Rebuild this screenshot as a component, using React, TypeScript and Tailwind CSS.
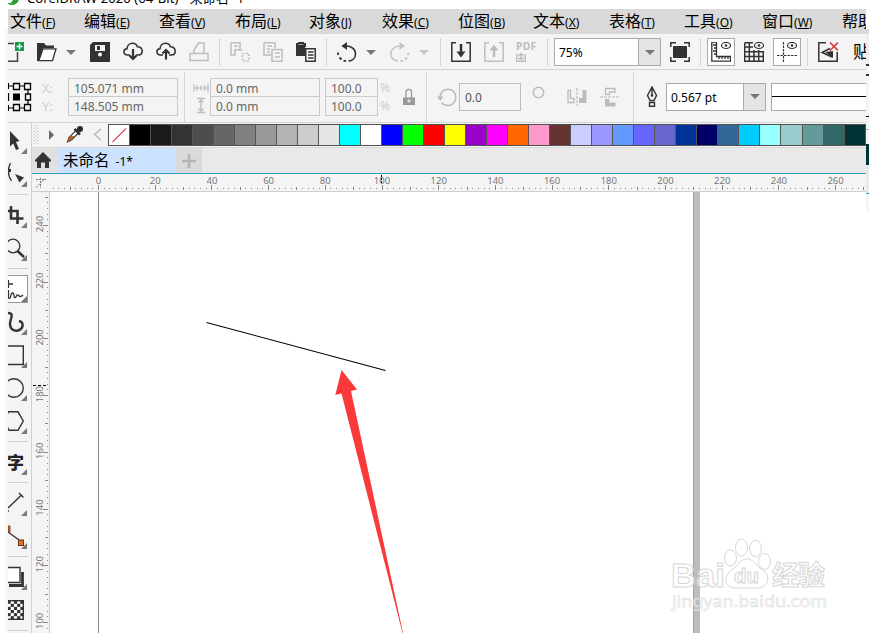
import type { ReactNode } from 'react'

const menus = [
    { label: '文件', hotkey: 'F', width: 'w-[74px]' },
    { label: '编辑', hotkey: 'E', width: 'w-[75px]' },
    { label: '查看', hotkey: 'V', width: 'w-[76px]' },
    { label: '布局', hotkey: 'L', width: 'w-[74px]' },
    { label: '对象', hotkey: 'J', width: 'w-[73px]' },
    { label: '效果', hotkey: 'C', width: 'w-[76px]' },
    { label: '位图', hotkey: 'B', width: 'w-[75px]' },
    { label: '文本', hotkey: 'X', width: 'w-[76px]' },
    { label: '表格', hotkey: 'T', width: 'w-[75px]' },
    { label: '工具', hotkey: 'O', width: 'w-[78px]' },
    { label: '窗口', hotkey: 'W', width: 'w-[80px]' },
    { label: '帮助', hotkey: 'H', width: 'w-[74px]' },
]

const swatches = [
    '#000000', '#1a1a1a', '#333333', '#4d4d4d', '#666666', '#808080', '#999999', '#b3b3b3', '#cccccc', '#e6e6e6',
    '#00ffff', '#ffffff', '#0000ff', '#00ff00', '#ff0000', '#ffff00', '#9900cc', '#ff00ff', '#ff6600', '#ff99cc',
    '#663333', '#ccccff', '#9999ff', '#6699ff', '#6666ff', '#6666cc', '#003399', '#000066', '#336699', '#00ccff',
    '#99ffff', '#99cccc', '#669999', '#336666', '#003333', '#336633',
]

// one ruler step is 2 mm
const STEP = 5.67

function Icon({ w = 20, h = 20, className = '', color = '#333', children }: { w?: number; h?: number; className?: string; color?: string; children: ReactNode }) {
    return (
        <svg width={w} height={h} viewBox={`0 0 ${w} ${h}`} fill="none" stroke={color} strokeWidth="1.5" className={`shrink-0 ${className}`}>
            {children}
        </svg>
    )
}

function Caret({ className = '', color = '#777' }: { className?: string; color?: string }) {
    return (
        <Icon w={10} h={5} className={className} color="none">
            <path d="M0 0H10L5 5Z" fill={color} />
        </Icon>
    )
}

function Separator({ className = '' }: { className?: string }) {
    return <div className={`w-px shrink-0 bg-[#d6d6d6] ${className}`} />
}

function Cloud({ up = false }: { up?: boolean }) {
    return (
        <Icon className="ml-[13px]">
            <path d="M7 13H4.5C2.5 13 .9 11.7 .9 9.8 .9 8 2.300 6.800 4 6.700 4.200 3.500 6.500 1.300 9.500 1.300 12 1.300 13.700 2.700 14.400 4.700 17.200 4.500 19.200 6.400 19.200 8.900 19.200 11.300 17.500 13 15.200 13H13" strokeWidth="1.6" />
            {up ? <path d="M10 17.500V8M6.500 11.500 10 8 13.500 11.500" strokeWidth="2.200" /> : <path d="M10 7V17M6.500 13.500 10 17 13.500 13.500" strokeWidth="2.200" />}
        </Icon>
    )
}

function Toolbar() {
    return (
        <div className="flex h-[36px] shrink-0 items-center overflow-hidden border-b border-[#d4d4d4] bg-[#f4f4f4] pt-px">
            <Icon w={16}>
                <path d="M0 1.500H6M9.500 10V19.200H0" stroke="#444" />
                <rect x="7" y="0" width="9" height="9" fill="#159a48" stroke="none" />
                <path d="M11.500 1.500V7.500M8.500 4.500H14.500" stroke="#fff" strokeWidth="1.500" />
            </Icon>
            <Icon className="ml-[13px]">
                <path d="M0 19V1H7L9 3.500H17V6H6L2 19Z" fill="#333" stroke="none" />
                <path d="M6 6.800H19L15.500 18.700H1.800Z" fill="#fff" strokeWidth="1.300" />
            </Icon>
            <Caret className="ml-[9px]" />
            <Icon className="ml-[14px]">
                <path d="M3 0H20V20H0V3Z" fill="#333" stroke="none" />
                <path d="M5 3H15V9H5Z" fill="#f4f4f4" stroke="none" />
                <path d="M7 4H10V8H7Z" fill="#333" stroke="none" />
                <circle cx="10" cy="12.500" r="2" fill="#f4f4f4" stroke="none" />
            </Icon>
            <Cloud />
            <Cloud up />
            <Icon className="ml-[13px]" color="#bdbdbd">
                <path d="M1 11.500H19V18.500H1ZM5 11V8L9.500 1H15V11" />
            </Icon>
            <Separator className="ml-[10px] h-[28px]" />
            <Icon className="ml-[10px]" color="#bdbdbd">
                <path d="M1 .8H10V8M1 .8V13H5V8H12M4 4H8" />
                <path d="M12.500 11.500H19V19H12.500Z" strokeDasharray="2 1.500" />
            </Icon>
            <Icon className="ml-[13px]" color="#bdbdbd">
                <path d="M1 .8H12V6M1 .8V13H8M4 4H9M4 7H7M4 10H7M9 7.500H19V19.200H9ZM12 11H17M12 15H17" />
            </Icon>
            <Icon className="ml-[13px]">
                <path d="M0 1H2V0H8V1H10V5H9V14H0Z" fill="#333" stroke="none" />
                <path d="M2.500 2.500H7.500" stroke="#999" strokeWidth="1" />
                <path d="M9.800 6.800H19.200V19.200H9.800ZM12 10H17.500M12 13H17.500M12 16H17.500" fill="#fff" />
            </Icon>
            <Separator className="ml-[10px] h-[28px]" />
            <Icon className="ml-[10px]">
                <path d="M5 4H9C14.500 4 18.500 7 18.500 12 18.500 16 15.500 18.800 11.500 19" strokeWidth="1.600" />
                <path d="M10 0V8L4.500 4Z" fill="#333" stroke="none" />
                <path d="M.8 10.500 1.200 13M2.500 15.500 4.500 17.500M6.500 18.600 9 19.200" strokeWidth="1.800" />
            </Icon>
            <Caret className="ml-[9px]" />
            <Icon className="ml-[14px]" color="#c5c5c5">
                <path d="M14 4H10C4.500 4 .8 7.500 .8 12 .8 16 4 18.800 8 19" strokeWidth="1.600" />
                <path d="M9.500 0V8L15 4Z" fill="#c5c5c5" stroke="none" />
                <path d="M18.500 10.500 18 13M17 15.500 15 17.500M13 18.600 10.500 19.200" strokeWidth="1.800" />
            </Icon>
            <Caret className="ml-[9px]" color="#c8c8c8" />
            <Separator className="ml-[11px] h-[28px]" />
            <Icon className="ml-[10px]">
                <path d="M5 .8H.8V19.200H19.200V.8H15" />
                <path d="M10 2V12" strokeWidth="2.500" />
                <path d="M5.500 9.500H14.500L10 15.500Z" fill="#333" stroke="none" />
            </Icon>
            <Icon className="ml-[13px]" color="#bdbdbd">
                <path d="M5 .8H.8V19.200H19.200V.8H15" />
                <path d="M10 15V6" strokeWidth="2.500" />
                <path d="M5.500 8.500H14.500L10 2.500Z" fill="#bdbdbd" stroke="none" />
            </Icon>
            <div className="ml-[12px] h-[22px] w-[22px] shrink-0 text-[#bdbdbd]">
                <div className="h-[11px] text-[10.5px] leading-[11px] font-bold tracking-[0.2px]">PDF</div>
                <Icon w={10} h={10} color="#bdbdbd">
                    <path d="M.7 2V9.300H9.300V2M5 8V2M2.500 4 5 1.500 7.500 4M2 6.500H8" strokeWidth="1.400" />
                </Icon>
            </div>
            <Separator className="ml-[9px] h-[28px]" />
            <div className="ml-[6px] flex h-[28px] w-[107px] shrink-0 border border-[#aaa] bg-white">
                <span className="flex-1 pl-[4px] text-[12px] leading-[27px] text-black">75%</span>
                <div className="flex w-[22px] items-center justify-center border-l border-[#aaa] bg-[#e4e4e4]">
                    <Caret />
                </div>
            </div>
            <Icon className="ml-[9px]">
                <rect x="3" y="4" width="14" height="12" fill="#333" stroke="none" />
                <path d="M.8 5V.8H6M14 .8H19.200V5M.8 15V19.200H6M14 19.200H19.200V15" />
            </Icon>
            <Separator className="ml-[10px] h-[28px]" />
            <div className="ml-[6px] flex h-[28px] w-[28px] shrink-0 items-center justify-center border border-[#aaa] bg-white">
                <Icon>
                    <path d="M.8 0H5.500V14.500H19.500V19.200H.8ZM2 3H5M3 6H5M2 9H5M3 12H5M8 17V14.500M11 17V14.500M14 17V14.500M17 17V14.500" strokeWidth="1.300" />
                    <ellipse cx="15" cy="3.500" rx="4.500" ry="3" strokeWidth="1.200" />
                    <circle cx="15" cy="3.500" r="1.300" fill="#333" stroke="none" />
                </Icon>
            </div>
            <Icon className="ml-[9px]">
                <path d="M.7 .7H9M.7 .7V19.300H19.300V9M.7 5H9M.7 9.700H19.300M.7 14.500H19.300M5.300 0V19.300M10 8V19.300M14.700 8V19.300" strokeWidth="1.500" />
                <ellipse cx="15" cy="3.500" rx="4.500" ry="3" strokeWidth="1.200" />
                <circle cx="15" cy="3.500" r="1.300" fill="#333" stroke="none" />
            </Icon>
            <div className="ml-[9px] flex h-[28px] w-[28px] shrink-0 items-center justify-center border border-[#aaa] bg-white">
                <Icon>
                    <path d="M6.500 0V20M0 13.500H20" strokeDasharray="2.500 1" strokeWidth="1.200" />
                    <ellipse cx="15" cy="3.500" rx="4.500" ry="3" strokeWidth="1.200" />
                    <circle cx="15" cy="3.500" r="1.300" fill="#333" stroke="none" />
                </Icon>
            </div>
            <Separator className="ml-[6px] h-[28px]" />
            <Icon className="ml-[10px]">
                <path d="M8 .8H.8V19.200H19.200V10" />
                <path d="M12 6.500 4 10.500 14 15" />
                <path d="M7 10 15 9V16Z" fill="#333" stroke="none" />
                <path d="M12 .5 20 8.500M20 .5 12 8.500" stroke="#dc3b40" strokeWidth="1.700" />
            </Icon>
            <span className="ml-[15px] shrink-0 text-[17px] text-black">贴</span>
        </div>
    )
}

function Stacked({ top, bottom, className }: { top: string; bottom: string; className: string }) {
    return (
        <div className={`shrink-0 border border-[#cacaca] text-[12px] text-[#666] ${className}`}>
            <div className="h-[18px] border-b border-[#cacaca] pl-[5px] leading-[19px]">{top}</div>
            <div className="h-[18px] pl-[5px] leading-[19px]">{bottom}</div>
        </div>
    )
}

function PropertyBar() {
    return (
        <div className="flex h-[53px] shrink-0 items-center overflow-hidden border-b border-[#d4d4d4] bg-[#f4f4f4] pt-px">
            <Icon w={24} h={30} color="#000">
                <path d="M0 4H20V26H0M.5 11V19" strokeWidth="1.200" />
                <path d="M5.500 1.500H11.500V7.500H5.500ZM16.500 1.500H22.500V7.500H16.500ZM5.500 22.500H11.500V28.500H5.500ZM16.500 22.500H22.500V28.500H16.500ZM17.500 12H22.500V18H17.500Z" fill="#f4f4f4" strokeWidth="1.300" />
                <rect x="5" y="11.500" width="7" height="7" fill="#000" stroke="none" />
                <path d="M.5 1V7M.5 23V29" strokeWidth="1" />
            </Icon>
            <div className="ml-[10px] w-[26px] shrink-0 text-[13px] leading-[18px] text-[#cfcfcf]">
                <div>X:</div>
                <div>Y:</div>
            </div>
            <Stacked top="105.071 mm" bottom="148.505 mm" className="h-[38px] w-[110px]" />
            <Separator className="ml-[6px] h-[50px]" />
            <Icon w={16} h={34} className="ml-[8px]" color="#bbb">
                <path d="M1 4V12M15 4V12M1 8H15M5 5.500 3 8 5 10.500M11 5.500 13 8 11 10.500M8 5.500V10.500" strokeWidth="1.200" />
                <path d="M4 18.500H12M4 32.500H12M8 18.500V32.500M5.500 22.500 8 20 10.500 22.500M5.500 28.500 8 31 10.500 28.500" strokeWidth="1.300" />
            </Icon>
            <Stacked top="0.0 mm" bottom="0.0 mm" className="ml-px h-[38px] w-[110px]" />
            <Stacked top="100.0" bottom="100.0" className="ml-[5px] h-[38px] w-[53px]" />
            <div className="ml-[2px] w-[12px] shrink-0 text-[12px] leading-[18px] text-[#cfcfcf]">
                <div>%</div>
                <div>%</div>
            </div>
            <Icon w={14} h={18} className="ml-[10px]" color="#999">
                <path d="M4 10V4C4 .5 9.500 .5 9.500 4V10" strokeWidth="1.300" />
                <path d="M1 9.500H13V17H1Z" fill="#999" stroke="none" />
                <path d="M5 13H9M7 11V15" stroke="#eee" strokeWidth="1" />
            </Icon>
            <Separator className="ml-[10px] h-[50px]" />
            <Icon className="ml-[10px]" color="#bbb">
                <path d="M3 10.500C3 5.500 6.500 2.300 11 2.300 15.500 2.300 18.800 5.800 18.800 10.300 18.800 15 15.300 18.500 11 18.500 8 18.500 6 17.300 4.500 15.500" />
                <path d="M0 9.500H6.500L3.200 14Z" fill="#bbb" stroke="none" />
            </Icon>
            <div className="ml-[2px] h-[28px] w-[62px] shrink-0 border border-[#bdbdbd] pl-[5px] text-[12px] leading-[27px] text-[#555]">0.0</div>
            <Icon w={13} h={13} className="mb-[9px] ml-[11px]" color="#bbb">
                <circle cx="6.500" cy="6.500" r="5.200" />
            </Icon>
            <Icon className="ml-[22px]" color="#bbb">
                <path d="M1 3.500H3.500V11.500H7V15.500H1Z" strokeWidth="1.300" />
                <path d="M10 1V19" strokeDasharray="3 1" strokeWidth="1.200" />
                <path d="M19.500 3H15.500V11H12V16H19.500Z" fill="#bbb" stroke="none" />
            </Icon>
            <Icon className="ml-[13px]" color="#bbb">
                <path d="M5.500 7.500V1.500H15V5H9.500V7.500Z" strokeWidth="1.300" />
                <path d="M0 10H20" strokeDasharray="3 1" strokeWidth="1.200" />
                <path d="M5 12H9.500V15.500H15.500V19.500H5Z" fill="#bbb" stroke="none" />
            </Icon>
            <Separator className="ml-[13px] h-[50px]" />
            <Icon w={12} h={22} className="ml-[12px]">
                <path d="M6 1 1.500 9.500 4 14.500H8L10.500 9.500ZM6 2V9.500M3.500 16.500H8.500V20.300H3.500Z" strokeWidth="1.400" />
                <circle cx="6" cy="9.500" r="1.300" fill="#333" stroke="none" />
            </Icon>
            <div className="ml-[8px] flex h-[28px] w-[100px] shrink-0 border border-[#aaa] bg-white">
                <span className="flex-1 pl-[4px] text-[12px] leading-[27px] text-black">0.567 pt</span>
                <div className="flex w-[22px] items-center justify-center border-l border-[#aaa] bg-[#e4e4e4]">
                    <Caret />
                </div>
            </div>
            <div className="ml-[5px] flex h-[28px] w-[110px] shrink-0 items-center border border-[#aaa] bg-white">
                <div className="h-px w-full bg-black" />
            </div>
        </div>
    )
}

function Tool({ children, flyout = true, color = '#333' }: { children: ReactNode; flyout?: boolean; color?: string }) {
    return (
        <Icon w={20} h={26} color={color}>
            {children}
            {flyout && <path d="M19 20V26H13Z" fill="#777" stroke="none" />}
        </Icon>
    )
}

function ToolRule() {
    return <div className="h-px w-[20px] shrink-0 bg-[#cfcfcf]" />
}

function Toolbox() {
    return (
        <div className="flex w-[24px] shrink-0 flex-col gap-[7px] overflow-hidden border-r border-[#cfcfcf] bg-[#f4f4f4] pt-[5px]">
            <Tool>
                <path d="M2 3 11.500 13 8 14 11 21 8 22 5.200 15.500 2 18.500Z" fill="#333" stroke="none" />
            </Tool>
            <Tool>
                <path d="M2.500 2C-.5 8 -.5 14 3.500 20" strokeWidth="1.300" />
                <rect x="0" y="8" width="3" height="3" fill="#333" stroke="none" />
                <path d="M7 13 16 16.500 11.500 21.500Z" fill="#333" stroke="none" />
            </Tool>
            <ToolRule />
            <Tool>
                <path d="M0 9H9.500V22M3 4V16.500H15.500" strokeWidth="2.600" />
            </Tool>
            <Tool>
                <circle cx="5" cy="11" r="6.800" strokeWidth="1.300" />
                <path d="M9.500 16 16 22" strokeWidth="2.500" />
            </Tool>
            <ToolRule />
            <div className="-my-px h-[28px] w-[20px] shrink-0 border-y border-r border-[#999] bg-white">
                <Tool>
                    <path d="M0 8H5M.5 4V12M.5 14V22C3.500 24 2 17 4.500 17 7 17 5 21.500 7 21.500 9 21.500 8 18 10 19 11.500 21 13 21 15 19" strokeWidth="1.300" />
                </Tool>
            </div>
            <Tool>
                <path d="M0 4C7 4 2 10 2 15 2 20 6 22.500 10 21.500 16 19.500 16 13 11 12" strokeWidth="2.400" />
            </Tool>
            <Tool>
                <path d="M0 4H15.300V22.500H0" strokeWidth="1.400" />
            </Tool>
            <Tool>
                <circle cx="6" cy="13" r="9.300" strokeWidth="1.400" />
            </Tool>
            <Tool>
                <path d="M0 3.800H10L15.300 13 10 22.300H1L-4 12.500 .5 3.800" strokeWidth="1.400" />
            </Tool>
            <ToolRule />
            <div className="flex h-[26px] shrink-0">
                <span className="-ml-[1px] w-[14px] text-[17px] leading-[27px] font-black text-[#222]">字</span>
                <Icon w={6} h={26} color="none">
                    <path d="M6 20V26H0Z" fill="#777" />
                </Icon>
            </div>
            <ToolRule />
            <Tool>
                <path d="M0 18 13.500 5M11 3 15.500 7.500M0 20V22" strokeWidth="1.400" />
            </Tool>
            <Tool>
                <path d="M0 9 11 17" strokeWidth="1.400" />
                <rect x="0" y="3" width="2" height="6" fill="#d86b20" stroke="#6b3515" strokeWidth=".8" />
                <rect x="10.500" y="17" width="5" height="5.500" fill="#e07020" stroke="#6b3515" strokeWidth="1" />
            </Tool>
            <ToolRule />
            <Tool>
                <path d="M1 21.500H14.500V8" strokeWidth="2.800" />
                <path d="M0 3.500H12V18.500H0" fill="#fff" strokeWidth="1.400" />
            </Tool>
            <Tool flyout={false}>
                <rect x="-4" y="3.700" width="19.300" height="18.600" fill="#fff" strokeWidth="1.400" />
                {[0, 1, 2, 3, 4, 5].map(row =>
                    [0, 1, 2, 3, 4].map(col =>
                        (row + col) % 2 === 0 && (
                            <rect key={`${row}-${col}`} x={col * 3.2 - 0.5} y={row * 3.1 + 3.7} width="3.2" height="3.1" fill="#333" stroke="none" />
                        ),
                    ),
                )}
            </Tool>
            <ToolRule />
        </div>
    )
}

function Palette() {
    return (
        <div className="flex h-[25px] shrink-0 items-start overflow-hidden border-b border-[#d8d8d8] bg-[#f4f4f4] pt-px">
            <Icon w={7} h={21} className="ml-px" color="#bbb">
                <path d="M1 1V20M5 1V20" strokeDasharray="1 2" strokeWidth="1" />
                <path d="M3 2.500V20" strokeDasharray="1 2" strokeWidth="1" />
            </Icon>
            <Icon w={5} h={21} className="ml-[9px]" color="none">
                <path d="M0 6 5 11 0 16Z" fill="#666" />
            </Icon>
            <Icon w={18} h={21} className="ml-[12px]">
                <path d="M1.500 18 3 13.500 10 6.500 12.500 9 5.500 16Z" fill="#fff" strokeWidth="1.100" />
                <path d="M1.500 18 3 14 5 12H8.500L5 16Z" fill="#c65d20" stroke="none" />
                <path d="M8.500 5 14 10.500M10.500 7.500 14.500 3.500" strokeWidth="2.500" />
                <circle cx="14" cy="5" r="3" fill="#232a38" stroke="none" />
            </Icon>
            <Icon w={9} h={21} className="ml-[9px]" color="#c4c4c4">
                <path d="M8 5 1.500 10.500 8 16" strokeWidth="1.800" />
            </Icon>
            <div className="ml-[6px] flex h-[22px] shrink-0 border-y border-[#505050]">
                <div className="w-[21px] border-l border-[#505050] bg-white">
                    <Icon w={20} h={20} color="#df4058">
                        <path d="M3.500 17 17 3.500" strokeWidth="1.100" />
                    </Icon>
                </div>
                {swatches.map(color => (
                    <div key={color} className="w-[21.02px] border-l border-[#555]" style={{ backgroundColor: color }} />
                ))}
            </div>
        </div>
    )
}

function DocumentTabs() {
    return (
        <div className="flex h-[25px] shrink-0 bg-[#e9e9e9]">
            <div className="flex w-[25px] items-center justify-center bg-[#e0e0e0]">
                <Icon w={16} h={16} className="-mt-[2px] -ml-[3px]">
                    <path d="M8 0 16 8V9.500H14V16H10V10.500H6V16H2V9.500H0V8Z" fill="#333" stroke="none" />
                </Icon>
            </div>
            <div className="w-[119px] bg-[#cce3ff] pl-[6px] text-[12px] leading-[24px] whitespace-nowrap text-black">
                <span className="text-[15.5px]">未命名</span>
                <span className="pl-[6px]">-1*</span>
            </div>
            <div className="flex w-[26px] items-center justify-center bg-[#dadada]">
                <Icon w={14} h={14} color="#b4b4b4">
                    <path d="M7 0V14M0 7H14" strokeWidth="2.600" />
                </Icon>
            </div>
        </div>
    )
}

function HorizontalRuler() {
    const origin = 66.5
    return (
        <svg width="834" height="18" className="shrink-0 border-b border-[#cfcfcf] bg-[#f4f4f4]" fontSize="9.5" fill="#777">
            <path d="M4 5.500H14M8.500 4V14M4 13.500 13 4.500" stroke="#777" strokeDasharray="2 1" fill="none" />
            {Array.from({ length: 144 }, (_, i) => i - 8).map(i => (
                <rect key={i} x={Math.round(origin + i * STEP - 0.5)} y={i % 10 === 0 ? 11 : i % 5 === 0 ? 13 : 14} width="1" height={i % 10 === 0 ? 5 : i % 5 === 0 ? 3 : 1} fill="#888" />
            ))}
            {Array.from({ length: 14 }, (_, i) => (
                <text key={i} x={origin + i * STEP * 10} y="10" textAnchor="middle">
                    {i * 20}
                </text>
            ))}
            <path d="M349.500 1V10" stroke="#000" strokeDasharray="2 1" />
        </svg>
    )
}

function VerticalRuler() {
    // 240 mm sits 33.5px below the top edge
    return (
        <svg width="18" height="441" className="shrink-0 border-r border-[#cfcfcf] bg-[#f4f4f4]" fontSize="9.500" fill="#777">
            {Array.from({ length: 78 }, (_, i) => i - 5).map(i => (
                <rect key={i} y={Math.round(33 + i * STEP)} x={i % 10 === 0 ? 11 : i % 5 === 0 ? 13 : 15} height="1" width={i % 10 === 0 ? 5 : i % 5 === 0 ? 3 : 1} fill="#888" />
            ))}
            {Array.from({ length: 8 }, (_, i) => (
                <text key={i} transform={`translate(11 ${32 + i * STEP * 10}) rotate(-90)`} textAnchor="middle">
                    {240 - i * 20}
                </text>
            ))}
            <path d="M1 193.500H16" stroke="#000" strokeDasharray="3 2" />
        </svg>
    )
}

function Watermark() {
    return (
        <g fill="#fff" fillOpacity=".55" stroke="#d6d6d6" strokeWidth="1" fontWeight="bold">
            <text x="621" y="395" fontSize="34" textLength="54" lengthAdjust="spacingAndGlyphs" fontFamily="Liberation Sans, sans-serif">Bai</text>
            <path d="M697 367C690 367 689 373 683 377 672 383 674 396 686 396 692 396 702 396 708 396 720 395 721 382 711 377 705 373 704 367 697 367Z" />
            <ellipse cx="680.500" cy="366" rx="6" ry="8" />
            <ellipse cx="691.500" cy="355.500" rx="6" ry="8.500" />
            <ellipse cx="705.500" cy="356.500" rx="6" ry="8" />
            <ellipse cx="714.500" cy="369.500" rx="6" ry="8" />
            <text x="684" y="391" fontSize="20" textLength="25" lengthAdjust="spacingAndGlyphs" fontFamily="Liberation Sans, sans-serif">du</text>
            <text x="722" y="393" fontSize="27" textLength="53">经验</text>
            <text x="622" y="415" fontSize="16" textLength="155" lengthAdjust="spacingAndGlyphs" strokeWidth=".5" fontWeight="normal">jingyan.baidu.com</text>
        </g>
    )
}

function Canvas() {
    return (
        <svg width="816" height="441" className="shrink-0 bg-white">
            <rect x="48" y="0" width="1" height="441" fill="#8c8c8c" />
            <rect x="643" y="0" width="7" height="441" fill="#bdbdbd" />
            <rect x="643" y="0" width="1" height="441" fill="#a0a0a0" />
            <path d="M156.500 130.500 335.500 178.500" stroke="#000" strokeWidth="1.100" />
            <path d="M291.500 178 307 197.500 301 199 353 441H352.500L291.500 201.500 285.300 203Z" fill="#fa3a3a" />
            <Watermark />
        </svg>
    )
}

// slivers of the window that show past its right edge
function EdgeStrip() {
    return (
        <div className="flex w-[3px] shrink-0 flex-col bg-white">
            <div className="h-[29px]" />
            <div className="h-[5px] bg-[#d9d9d9]" />
            <div className="h-[30px] bg-[#efefef]" />
            <div className="h-[2px] bg-[#333]" />
            <div className="h-[8px] bg-[#f4f4f4]" />
            <div className="h-[2px] bg-[#333]" />
            <div className="h-[40px] bg-[#f4f4f4]" />
            <div className="h-px bg-black" />
            <div className="h-[12px] bg-[#f4f4f4]" />
            <div className="h-px bg-[#bbb]" />
            <div className="h-[14px] bg-[#f4f4f4]" />
            <div className="h-[21px] bg-[#003333]" />
            <div className="h-[28px] bg-[#eaeaea]" />
            <div className="h-px bg-[#2f9fc6]" />
            <div className="h-[18px] bg-[#f4f4f4]" />
        </div>
    )
}

export default function App() {
    return (
        <div className="flex h-[633px] w-[875px] overflow-hidden bg-white font-['Noto_Sans','Noto_Sans_CJK_SC',sans-serif]">
            <div className="mt-[29px] ml-[5px] w-[3px] shrink-0 bg-[#f7f7f7]" />
            <div className="flex w-[858px] shrink-0 flex-col overflow-hidden">
                {/* Title bar */}
                <div className="flex h-[9px] shrink-0 overflow-hidden bg-white">
                    <Icon w={11} h={9} color="none">
                        <circle cx="4" cy="-2" r="7" fill="#25a030" />
                        <path d="M0 0H5L3 3H0Z" fill="#fff" />
                    </Icon>
                    <span className="-mt-[13px] ml-[8px] text-[13px] leading-[22px] tracking-[0.1px] whitespace-nowrap text-black">CorelDRAW 2020 (64-Bit) - 未命名 -1*</span>
                </div>

                {/* Menu bar */}
                <div className="flex h-[25px] shrink-0 items-center overflow-hidden bg-[#d9d9d9] pl-[2px] text-black">
                    {menus.map(menu => (
                        <div key={menu.label} className={`shrink-0 text-[12px] leading-[24px] whitespace-nowrap ${menu.width}`}>
                            <span className="text-[16px]">{menu.label}</span>(<span className="underline underline-offset-1">{menu.hotkey}</span>)
                        </div>
                    ))}
                </div>

                <Toolbar />
                <PropertyBar />

                <div className="flex min-h-0 flex-1">
                    <Toolbox />
                    <div className="flex w-[834px] shrink-0 flex-col overflow-hidden">
                        <Palette />
                        <DocumentTabs />
                        <div className="h-px shrink-0 bg-[#2f9fc6]" />
                        <HorizontalRuler />
                        <div className="flex shrink-0">
                            <VerticalRuler />
                            <Canvas />
                        </div>
                    </div>
                </div>
            </div>
            <EdgeStrip />
        </div>
    )
}
